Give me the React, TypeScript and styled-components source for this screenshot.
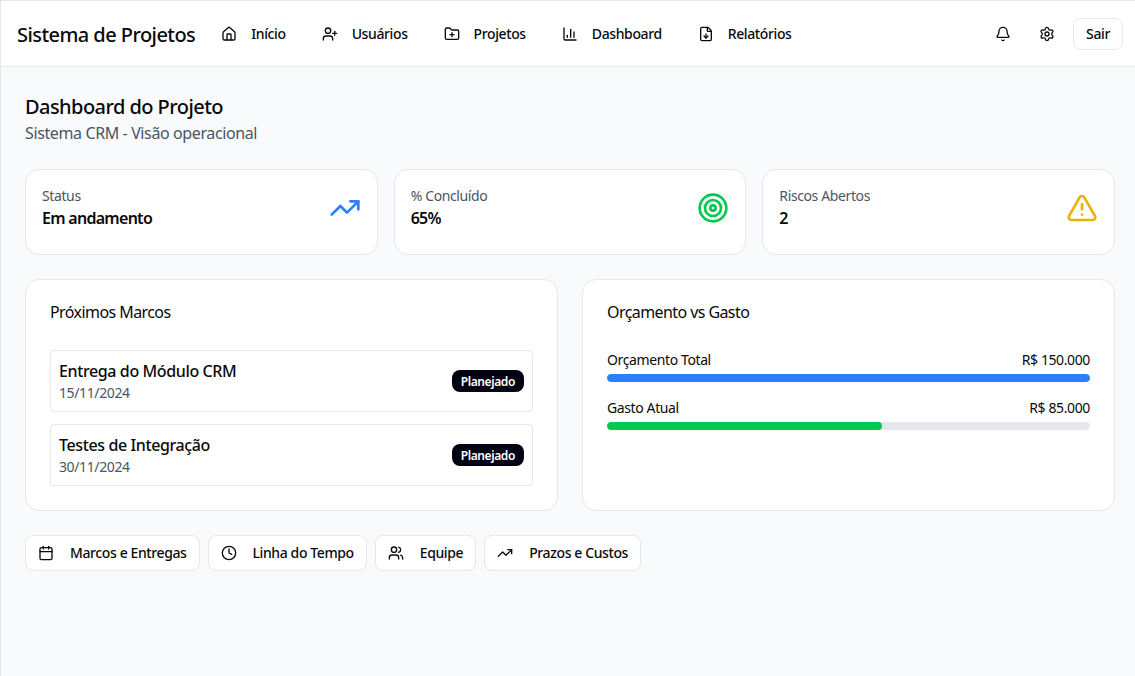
import styled, { createGlobalStyle } from "styled-components"
import {
  Bell,
  Calendar,
  ChartColumn,
  Clock,
  FileDown,
  FolderPlus,
  House,
  Settings,
  Target,
  TrendingUp,
  TriangleAlert,
  UserPlus,
  Users,
} from "lucide-react"

const GlobalStyle = createGlobalStyle`
  * {
    box-sizing: border-box;
  }

  body {
    margin: 0;
    background: #f9fafb;
    color: #0a0a0a;
    font-family: "Noto Sans", "Open Sans", sans-serif;
    letter-spacing: -0.024em;
  }
`

const navItems = [
  { label: "Início", icon: House },
  { label: "Usuários", icon: UserPlus },
  { label: "Projetos", icon: FolderPlus },
  { label: "Dashboard", icon: ChartColumn },
  { label: "Relatórios", icon: FileDown },
]

const stats = [
  { label: "Status", value: "Em andamento", icon: TrendingUp, color: "#2b7fff" },
  { label: "% Concluído", value: "65%", icon: Target, color: "#00c950" },
  { label: "Riscos Abertos", value: "2", icon: TriangleAlert, color: "#eab308" },
]

const milestones = [
  { title: "Entrega do Módulo CRM", date: "15/11/2024" },
  { title: "Testes de Integração", date: "30/11/2024" },
]

const budget = [
  { label: "Orçamento Total", value: "R$ 150.000", percent: 100, color: "#2b7fff" },
  { label: "Gasto Atual", value: "R$ 85.000", percent: 57, color: "#00c950" },
]

const tabs = [
  { label: "Marcos e Entregas", icon: Calendar },
  { label: "Linha do Tempo", icon: Clock },
  { label: "Equipe", icon: Users },
  { label: "Prazos e Custos", icon: TrendingUp },
]

export default function App() {
  return <Page>
    <GlobalStyle />
    <Header>
      <Brand>Sistema de Projetos</Brand>
      <Nav>
        {navItems.map(({ label, icon: Icon }) => (
          <NavItem key={label}>
            <Icon size={16} strokeWidth={2} />
            <span>{label}</span>
          </NavItem>
        ))}
      </Nav>
      <HeaderActions>
        <IconButton><Bell size={16} /></IconButton>
        <IconButton><Settings size={16} /></IconButton>
        <LogoutButton>Sair</LogoutButton>
      </HeaderActions>
    </Header>

    <Main>
      <Title>Dashboard do Projeto</Title>
      <Subtitle>Sistema CRM - Visão operacional</Subtitle>

      <StatsGrid>
        {stats.map(({ label, value, icon: Icon, color }) => (
          <StatCard key={label}>
            <div>
              <StatLabel>{label}</StatLabel>
              <StatValue>{value}</StatValue>
            </div>
            <Icon size={32} color={color} />
          </StatCard>
        ))}
      </StatsGrid>

      <PanelsGrid>
        <Panel>
          <PanelTitle>Próximos Marcos</PanelTitle>
          <MilestoneList>
            {milestones.map((item) => (
              <Milestone key={item.title}>
                <div>
                  <MilestoneTitle>{item.title}</MilestoneTitle>
                  <MilestoneDate>{item.date}</MilestoneDate>
                </div>
                <Badge>Planejado</Badge>
              </Milestone>
            ))}
          </MilestoneList>
        </Panel>

        <Panel>
          <PanelTitle>Orçamento vs Gasto</PanelTitle>
          <BudgetList>
            {budget.map((item) => (
              <div key={item.label}>
                <BudgetRow>
                  <span>{item.label}</span>
                  <span>{item.value}</span>
                </BudgetRow>
                <Track>
                  <Fill $color={item.color} style={{ width: `${item.percent}%` }} />
                </Track>
              </div>
            ))}
          </BudgetList>
        </Panel>
      </PanelsGrid>

      <Tabs>
        {tabs.map(({ label, icon: Icon }) => (
          <Tab key={label}>
            <Icon size={16} />
            <span>{label}</span>
          </Tab>
        ))}
      </Tabs>
    </Main>
  </Page>
}

const Page = styled.div`
  min-height: 676px;
  border-top: 1px solid #e5e7eb;
  border-left: 1px solid #e5e7eb;
`

const Header = styled.header`
  display: flex;
  align-items: center;
  height: 66px;
  padding: 0 12px 0 16px;
  background: #fff;
  border-bottom: 1px solid #e5e7eb;
`

const Brand = styled.div`
  padding-top: 2px;
  font-size: 20px;
  font-weight: 500;
  letter-spacing: -0.028em;
  line-height: 28px;
  white-space: nowrap;
`

const Nav = styled.nav`
  display: flex;
  align-items: center;
  gap: 2px;
  margin-left: 14px;
`

const NavItem = styled.div`
  display: flex;
  align-items: center;
  gap: 14px;
  height: 36px;
  padding: 0 12px;
  margin-right: 10px;
  font-size: 14px;
  font-weight: 500;
  white-space: nowrap;
`

const HeaderActions = styled.div`
  display: flex;
  align-items: center;
  gap: 8px;
  margin-left: auto;
`

const IconButton = styled.button`
  display: flex;
  align-items: center;
  justify-content: center;
  width: 36px;
  height: 36px;
  padding: 0;
  background: none;
  border: none;
  color: inherit;
`

const LogoutButton = styled.button`
  height: 32px;
  width: 50px;
  padding: 0;
  background: #fff;
  border: 1px solid #e5e7eb;
  border-radius: 8px;
  color: inherit;
  font-family: inherit;
  font-size: 14px;
  font-weight: 500;
  letter-spacing: inherit;
`

const Main = styled.main`
  padding: 26px 20px 24px 24px;
`

const Title = styled.h1`
  margin: 0;
  font-size: 20px;
  font-weight: 500;
  letter-spacing: -0.028em;
  line-height: 28px;
`

const Subtitle = styled.p`
  margin: 0;
  color: #4a5565;
  font-size: 16px;
  line-height: 24px;
`

const StatsGrid = styled.div`
  display: grid;
  grid-template-columns: repeat(3, 1fr);
  gap: 16px;
  margin-top: 24px;
`

const StatCard = styled.div`
  display: flex;
  align-items: center;
  justify-content: space-between;
  padding: 16px 16px 24px;
  background: #fff;
  border: 1px solid #e5e7eb;
  border-radius: 14px;
`

const StatLabel = styled.div`
  color: #4a5565;
  font-size: 14px;
  line-height: 20px;
`

const StatValue = styled.div`
  font-size: 16px;
  font-weight: 600;
  letter-spacing: -0.045em;
  line-height: 24px;
`

const PanelsGrid = styled.div`
  display: grid;
  grid-template-columns: repeat(2, 1fr);
  gap: 24px;
  margin-top: 24px;
`

const Panel = styled.section`
  height: 232px;
  padding: 24px;
  background: #fff;
  border: 1px solid #e5e7eb;
  border-radius: 14px;
`

const PanelTitle = styled.h2`
  margin: 0;
  font-size: 16px;
  font-weight: 400;
  letter-spacing: -0.036em;
  line-height: 16px;
`

const MilestoneList = styled.div`
  display: flex;
  flex-direction: column;
  gap: 12px;
  margin-top: 30px;
`

const Milestone = styled.div`
  display: flex;
  align-items: center;
  justify-content: space-between;
  height: 62px;
  padding: 0 8px;
  border: 1px solid #e5e7eb;
  border-radius: 4px;
`

const MilestoneTitle = styled.div`
  font-size: 16px;
  font-weight: 500;
  line-height: 24px;
`

const MilestoneDate = styled.div`
  color: #4a5565;
  font-size: 14px;
  line-height: 20px;
`

const Badge = styled.span`
  padding: 3px 9px 1px;
  background: #030213;
  border-radius: 8px;
  color: #fff;
  font-size: 12px;
  font-weight: 600;
  line-height: 18px;
`

const BudgetList = styled.div`
  display: flex;
  flex-direction: column;
  gap: 16px;
  margin-top: 30px;
`

const BudgetRow = styled.div`
  display: flex;
  justify-content: space-between;
  margin-bottom: 4px;
  font-size: 14px;
  line-height: 20px;
`

const Track = styled.div`
  height: 8px;
  overflow: hidden;
  background: #e5e7eb;
  border-radius: 999px;
`

const Fill = styled.div<{ $color: string }>`
  height: 100%;
  background: ${(props) => props.$color};
  border-radius: 999px;
`

const Tabs = styled.div`
  display: flex;
  gap: 8px;
  margin-top: 24px;
`

const Tab = styled.div`
  display: flex;
  align-items: center;
  gap: 16px;
  height: 36px;
  padding: 0 12px;
  background: #fff;
  border: 1px solid #e5e7eb;
  border-radius: 8px;
  font-size: 14px;
  font-weight: 500;
  letter-spacing: -0.028em;
  white-space: nowrap;

  span {
    margin-bottom: 2px;
  }
`
